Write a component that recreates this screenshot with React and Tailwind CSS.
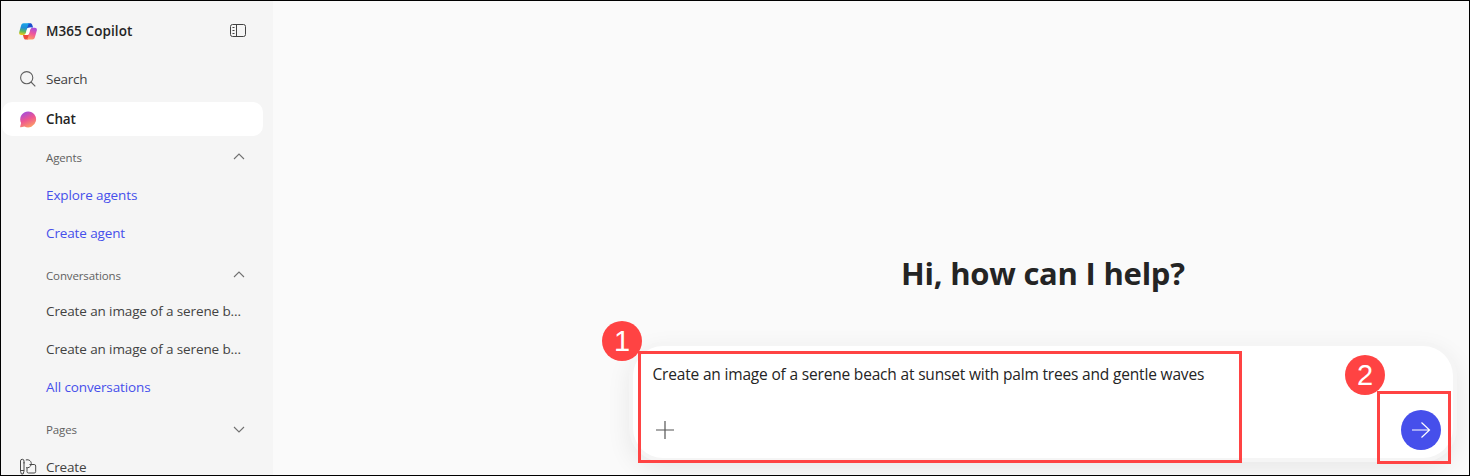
import React from "react";

function CopilotLogo() {
  return (
    <svg width="18" height="17" viewBox="0 0 18 17" className="shrink-0">
      <defs>
        <linearGradient id="cl-a" x1="0.5" y1="0" x2="0.35" y2="1">
          <stop offset="0" stopColor="#18a5ea" />
          <stop offset="0.4" stopColor="#1f8fd6" />
          <stop offset="0.7" stopColor="#5cb85f" />
          <stop offset="1" stopColor="#f2cb14" />
        </linearGradient>
        <linearGradient id="cl-b" x1="0.7" y1="0" x2="0.4" y2="1">
          <stop offset="0" stopColor="#a44fe0" />
          <stop offset="0.5" stopColor="#f0569a" />
          <stop offset="1" stopColor="#ff9a62" />
        </linearGradient>
      </defs>
      <path d="M9 0.200h2.300c1 0 1.600.6 1.900 1.500l.9 2.800h-2.300c-1.300 0-1.900.4-2.300 1.500L7 4z" fill="#1c4fcf" />
      <path d="M9 16.500H6.600c-1 0-1.500-.6-1.800-1.500L3.900 12h1.600c1.300 0 1.900-.4 2.300-1.500L11 12z" fill="#ee4a3c" />
      <path d="M4.600.200h6.100C9.700.600 9.300 1.500 8.900 2.800L6.800 10c-.4 1.300-1 2-2.300 2H2.200C.5 12-.2 10.800.2 9.200L2.100 2.400C2.600.9 3.300.2 4.600.2z" fill="url(#cl-a)" />
      <path d="M13.400 16.500H7.300c1-.4 1.400-1.300 1.800-2.600l2.100-7.200c.4-1.300 1-2 2.300-2h2.300c1.700 0 2.400 1.200 2 2.800l-1.900 6.800c-.5 1.500-1.200 2.200-2.500 2.200z" fill="url(#cl-b)" />
      <path d="M9.700 4.700h3c-1 .3-1.400 1-1.700 2l-1.100 3.700c-.3 1-.9 1.600-1.900 1.600H5.300c1-.3 1.400-1 1.700-2l1.100-3.800c.2-.9.700-1.500 1.600-1.500z" fill="#fff" />
    </svg>
  );
}

function PanelIcon() {
  return (
    <svg width="17" height="14" viewBox="0 0 17 14" fill="none" stroke="#424242" strokeWidth="1">
      <rect x="0.500" y="0.500" width="15" height="12" rx="2" />
      <path d="M6.500 .500v12M2.500 3.500h2M2.500 6.500h2M2.500 9.500h2" />
    </svg>
  );
}

function SearchIcon() {
  return (
    <svg width="17" height="17" viewBox="0 0 17 17" fill="none" stroke="#606060" strokeWidth="1.100">
      <circle cx="6.700" cy="6.700" r="6.100" />
      <path d="M11 11l4.300 4.300" />
    </svg>
  );
}

function ChatIcon() {
  return (
    <svg width="17" height="17" viewBox="0 0 17 17">
      <defs>
        <linearGradient id="ch-a" x1="0.25" y1="0" x2="0.7" y2="1">
          <stop offset="0" stopColor="#a04de0" />
          <stop offset="0.5" stopColor="#ee5690" />
          <stop offset="1" stopColor="#fda163" />
        </linearGradient>
      </defs>
      <path d="M8.200 0.400a8 8 0 1 1-3.800 15.100L.9 16.300c-.5.100-.9-.3-.7-.8l.9-3.400A8 8 0 0 1 8.200.4z" fill="url(#ch-a)" />
    </svg>
  );
}

function CreateIcon() {
  return (
    <svg width="17" height="18" viewBox="0 0 17 18" fill="none" stroke="#484848" strokeWidth="1">
      <path d="M.5 4v9.200L1.400 16h1.700l.9-2.800V4" />
      <path d="M.5 5.500V3a1.750 1.750 0 0 1 3.500 0v2.500M.5 12.500H4" />
      <path d="M5.800 2c3.300-1 6 1.400 5.400 4.500-.5 2.400-2.700 3.700-5.100 3.200" />
      <path d="M9.500 6.500h4.700A1.500 1.500 0 0 1 15.700 8v5.500a1.500 1.500 0 0 1-1.500 1.500H8.500A1.500 1.500 0 0 1 7 13.500V9.700" />
    </svg>
  );
}

function Chevron({ down }) {
  return (
    <svg width="12" height="7" viewBox="0 0 12 7" fill="none" stroke="#707070" strokeWidth="1.100" className="-translate-y-px">
      <path d={down ? "M1 1l5 5 5-5" : "M1 6l5-5 5 5"} />
    </svg>
  );
}

function Section({ title, down, className }) {
  return (
    <div className={"flex shrink-0 items-center justify-between pl-[45px] pr-[28px] " + className}>
      <span className="text-[11.500px] tracking-[-0.130px] text-[#616161]">{title}</span>
      <Chevron down={down} />
    </div>
  );
}

function Item({ children, link }) {
  return (
    <div
      className={
        "flex h-[38px] shrink-0 items-center whitespace-nowrap pl-[45px] text-[13.500px] tracking-[-0.120px] " +
        (link ? "text-[#464feb]" : "text-[#424242]")
      }
    >
      {children}
    </div>
  );
}

function Sidebar() {
  return (
    <nav className="flex w-[272px] shrink-0 flex-col overflow-hidden bg-[#f5f5f5]">
      <div className="flex h-[60px] shrink-0 items-center justify-between pl-[18px] pr-[26px]">
        <div className="flex items-center gap-[9px]">
          <CopilotLogo />
          <span className="text-[13.500px] font-semibold tracking-[0.080px] text-[#242424]">M365 Copilot</span>
        </div>
        <PanelIcon />
      </div>
      <div className="flex h-9 shrink-0 items-center gap-[9px] pl-[19px] text-[13.500px] tracking-[-0.250px] text-[#424242]">
        <SearchIcon />
        <span>Search</span>
      </div>
      <div className="ml-px mr-[10px] mt-[5px] flex h-[34px] shrink-0 items-center gap-[9px] rounded-[10px] bg-white pl-[18px] text-[13.500px] font-semibold tracking-[-0.150px] text-[#242424]">
        <ChatIcon />
        <span>Chat</span>
      </div>
      <Section title="Agents" className="mt-[3px] h-[37px]" />
      <Item link>Explore agents</Item>
      <Item link>Create agent</Item>
      <Section title="Conversations" className="mt-[7px] h-[33px]" />
      <Item>Create an image of a serene b...</Item>
      <Item>Create an image of a serene b...</Item>
      <Item link>All conversations</Item>
      <Section title="Pages" down className="mt-[5px] h-[38px]" />
      <div className="flex h-9 shrink-0 items-center gap-[9px] pl-[19px] text-[13.500px] tracking-[-0.200px] text-[#424242]">
        <CreateIcon />
        <span>Create</span>
      </div>
    </nav>
  );
}

function Composer() {
  return (
    <div className="ml-[360px] mt-[51px] flex h-[112px] w-[820px] shrink-0 flex-col justify-between rounded-[30px] bg-white pb-2 pl-[19.500px] pr-3 pt-4 shadow-[0_0_0_4px_#f5f5f5,0_8px_24px_4px_rgba(0,0,0,0.075)]">
      <p className="whitespace-nowrap text-[15.500px] leading-6 tracking-[-0.180px] text-[#242424]">
        Create an image of a serene beach at sunset with palm trees and gentle waves
      </p>
      <div className="flex items-center justify-between">
        <svg width="18" height="18" viewBox="0 0 18 18" className="ml-[3.500px]" stroke="#555" strokeWidth="1.200">
          <path d="M9 0v18M0 9h18" />
        </svg>
        <button className="flex size-10 items-center justify-center rounded-full bg-[#464feb]">
          <svg width="20" height="18" viewBox="0 0 20 18" fill="none" stroke="#fff" strokeWidth="1.200">
            <path d="M1 9h17.500M10.500 1.500L18.500 9l-8 7.500" />
          </svg>
        </button>
      </div>
    </div>
  );
}

function Badge({ children, className }) {
  return (
    <div
      className={
        "absolute flex size-10 items-center justify-center rounded-full bg-[#ff4343] font-['Liberation_Sans',sans-serif] text-[29px] leading-none text-white " +
        className
      }
    >
      {children}
    </div>
  );
}

export default function App() {
  return (
    <div className="relative flex h-[476px] w-[1470px] overflow-hidden border border-black bg-[#fafafa] font-['Open_Sans',sans-serif]">
      <Sidebar />
      <main className="flex min-w-0 flex-1 flex-col overflow-hidden">
        <h1 className="mt-[250px] h-11 shrink-0 pl-[628px] text-[31px] font-bold leading-[44px] tracking-[-0.230px] text-[#242424]">
          <span className="whitespace-nowrap">Hi, how can I help?</span>
        </h1>
        <Composer />
      </main>
      <div className="absolute left-[637px] top-[350px] h-[112px] w-[604px] border-[3px] border-[#ff4343]" />
      <div className="absolute left-[1376px] top-[390px] h-[73px] w-[74px] border-[3px] border-[#ff4343]" />
      <Badge className="left-[601px] top-[320px]">1</Badge>
      <Badge className="left-[1344px] top-[354px]">2</Badge>
    </div>
  );
}
